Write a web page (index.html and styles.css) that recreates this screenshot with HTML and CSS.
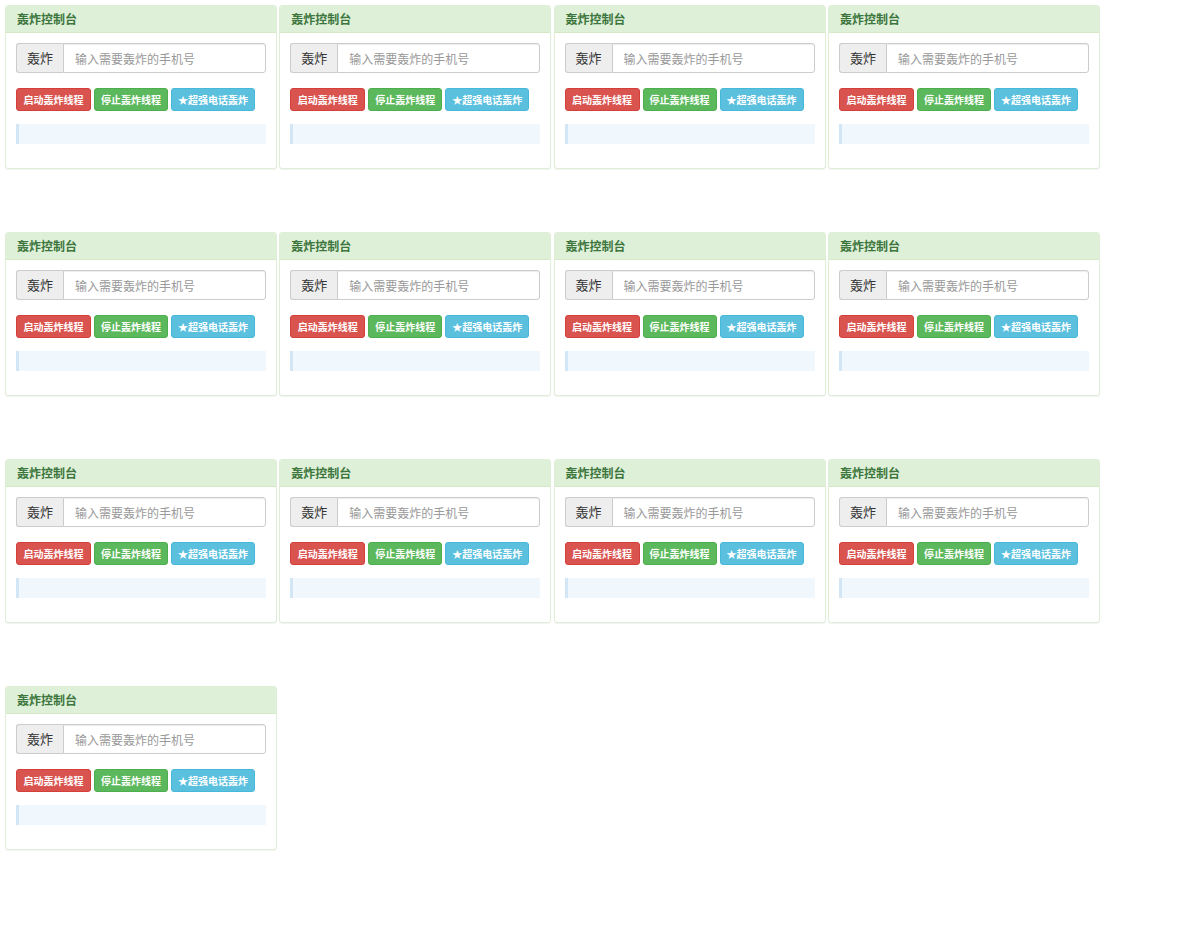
FILE: index.html
```html
<!DOCTYPE html>
<html lang="zh-CN">
  <head>
    <meta charset="UTF-8" />
    <title>轰炸控制台</title>
    <link rel="stylesheet" href="styles.css">
  </head>
  <body>
    <div class="board" id="board"></div>
    <template id="panel-tpl">
      <div class="panel">
        <div class="panel-heading">轰炸控制台</div>
        <div class="panel-body">
          <div class="input-group">
            <span class="addon">轰炸</span>
            <input class="phone" type="text" placeholder="输入需要轰炸的手机号">
          </div>
          <div class="actions">
            <button class="btn btn-danger">启动轰炸线程</button>
            <button class="btn btn-success">停止轰炸线程</button>
            <button class="btn btn-info">★超强电话轰炸</button>
          </div>
          <div class="log"></div>
        </div>
      </div>
    </template>
    <script>
      // build the 13 panels
      const board = document.getElementById("board");
      const tpl = document.getElementById("panel-tpl");
      for (let i = 0; i < 13; i++) {
        board.appendChild(tpl.content.cloneNode(true));
      }
    </script>
  </body>
</html>
```

FILE: styles.css
```css
body {
  margin: 0;
  font-family: "Noto Sans CJK SC", "Liberation Sans", sans-serif;
  color: #333;
  background: #fff;
}
.board {
  display: grid;
  grid-template-columns: repeat(4, 272px);
  column-gap: 2.3px;
  row-gap: 63px;
  padding: 5px;
}
.panel {
  height: 164px;
  box-sizing: border-box;
  border: 1px solid #dfeed6;
  border-radius: 3px;
  background: #fff;
  box-shadow: 0 1px 1px rgba(0, 0, 0, 0.05);
}
.panel-heading {
  height: 27px;
  box-sizing: border-box;
  padding: 0 11px;
  line-height: 26px;
  font-size: 12px;
  font-weight: bold;
  color: #3c763d;
  background: #dff0d8;
  border-bottom: 1px solid #d6e9c6;
  border-radius: 2px 2px 0 0;
}
.panel-body {
  padding: 10px 10px 0 10px;
}
.input-group {
  display: flex;
  height: 30px;
}
.addon {
  width: 47px;
  box-sizing: border-box;
  border: 1px solid #ccc;
  border-right: 0;
  border-radius: 3px 0 0 3px;
  background: #eee;
  font-size: 13px;
  line-height: 28px;
  text-align: center;
  color: #333;
}
.phone {
  flex: 1;
  min-width: 0;
  box-sizing: border-box;
  height: 30px;
  margin: 0;
  padding: 0 11px;
  border: 1px solid #ccc;
  border-radius: 0 3px 3px 0;
  box-shadow: inset 0 1px 1px rgba(0, 0, 0, 0.075);
  font-family: inherit;
  font-size: 12px;
  color: #555;
  outline: none;
}
.phone::placeholder {
  color: #999;
}
.actions {
  display: flex;
  gap: 3px;
  margin-top: 15px;
}
.btn {
  height: 23px;
  box-sizing: border-box;
  padding: 0;
  border: 1px solid transparent;
  border-radius: 3px;
  font-family: inherit;
  font-size: 10px;
  font-weight: bold;
  white-space: nowrap;
  text-align: center;
  color: #fff;
  cursor: pointer;
}
.btn-danger {
  width: 75px;
  background: #d9534f;
  border-color: #d43f3a;
}
.btn-success {
  width: 74px;
  background: #5cb85c;
  border-color: #4cae4c;
}
.btn-info {
  width: 84px;
  background: #5bc0de;
  border-color: #46b8da;
}
.log {
  height: 20px;
  margin-top: 13px;
  border-left: 3px solid #d3e6f5;
  background: #f0f7fd;
}
```
